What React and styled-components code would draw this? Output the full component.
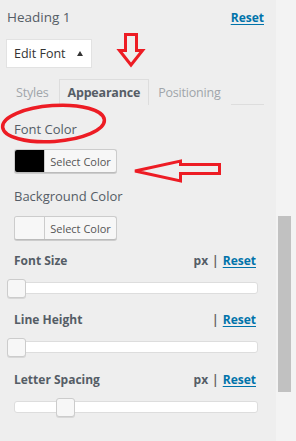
import React from "react";
import styled, { createGlobalStyle } from "styled-components";

const GlobalStyle = createGlobalStyle`
  html, body { margin: 0; padding: 0; }
  body {
    background: #eeeeee;
    font-family: "Open Sans", "Noto Sans", sans-serif;
  }
  * { box-sizing: border-box; }
`;

const Page = styled.div`
  position: relative;
  display: flex;
  width: 296px;
  height: 441px;
  overflow: hidden;
  background: #eeeeee;
`;

const Panel = styled.div`
  width: 276px;
  padding: 7px 12px 0 7px;
  display: flex;
  flex-direction: column;
`;

const HeaderRow = styled.div`
  display: flex;
  justify-content: space-between;
  align-items: baseline;
  height: 20px;
  line-height: 20px;
`;

const Title = styled.span`
  font-size: 13.5px;
  color: #555d66;
`;

const ResetLink = styled.a`
  font-size: 12px;
  font-weight: 700;
  color: #0073aa;
  text-decoration: underline;
  text-underline-offset: 2px;
  cursor: pointer;
`;

const EditFontButton = styled.button`
  margin: 12px 0 0 -1px;
  width: 86px;
  height: 29px;
  padding: 0 8px 0 7px;
  display: flex;
  align-items: center;
  justify-content: space-between;
  background: #ffffff;
  border: 1px solid #e2e2e2;
  font-family: inherit;
  font-size: 12.5px;
  color: #333333;
`;

const Caret = styled.span`
  width: 0;
  height: 0;
  border-left: 3.5px solid transparent;
  border-right: 3.5px solid transparent;
  border-bottom: 5px solid #333333;
`;

const Tabs = styled.div`
  margin-top: 11px;
  display: flex;
  height: 26px;
  border-bottom: 1px solid #dddddd;
`;

const Tab = styled.div`
  height: 26px;
  padding: 0 ${(p) => (p.$active ? "8px" : "9px")} 0 8px;
  display: flex;
  align-items: center;
  font-size: 12.5px;
  letter-spacing: -0.2px;
  font-weight: ${(p) => (p.$active ? 700 : 400)};
  color: ${(p) => (p.$active ? "#555d66" : "#a0a5aa")};
  border: 1px solid ${(p) => (p.$active ? "#dddddd" : "transparent")};
  border-bottom: none;
  background: #eeeeee;
  margin-bottom: -1px;
`;

const Content = styled.div`
  padding: 0 6px 0 7px;
  display: flex;
  flex-direction: column;
  align-items: flex-start;
`;

const FieldLabel = styled.div`
  margin-top: ${(p) => p.$gap}px;
  font-size: 13px;
  line-height: 18px;
  color: #555d66;
`;

const ColorButton = styled.button`
  margin-top: 11px;
  display: flex;
  align-items: stretch;
  height: 24px;
  width: 103px;
  padding: 0;
  border: 1px solid #cccccc;
  border-bottom-color: #bbbbbb;
  border-radius: 3px;
  background: #f7f7f7;
  box-shadow: 0 1px 0 #cccccc;
  overflow: hidden;
  font-family: inherit;
`;

const Swatch = styled.span`
  width: 30px;
  background: ${(p) => p.$color};
  border-right: 1px solid #cccccc;
`;

const ColorText = styled.span`
  flex: 1;
  display: flex;
  align-items: center;
  justify-content: center;
  font-size: 11px;
  color: #555555;
`;

const ControlHeader = styled.div`
  margin-top: ${(p) => p.$gap}px;
  width: 100%;
  display: flex;
  justify-content: space-between;
  line-height: 18px;
  font-size: 12px;
  font-weight: 700;
  color: #555d66;
`;

const Units = styled.span`
  display: flex;
  gap: 4px;
  padding-right: 2px;
`;

const Sep = styled.span`
  color: #666;
`;

const SliderWrap = styled.div`
  position: relative;
  margin-top: 9px;
  width: 244px;
  height: 18px;
  padding-top: 3px;
`;

const Track = styled.div`
  height: 12px;
  background: #ffffff;
  border: 1px solid #dddddd;
  border-radius: 3px;
`;

const Handle = styled.span`
  position: absolute;
  top: 0;
  width: 19px;
  height: 19px;
  background: #f7f7f7;
  border: 1px solid #cccccc;
  border-radius: 3px;
  box-shadow: 0 1px 0 #d8d8d8;
`;

const Scrollbar = styled.div`
  width: 20px;
  background: #f3f3f3;
  padding: 216px 5px 0 2px;
`;

const Thumb = styled.div`
  height: 176px;
  background: #c1c1c1;
`;

const Annotations = styled.svg`
  position: absolute;
  left: 0;
  top: 0;
  pointer-events: none;
`;

function Slider({ pct }) {
  return (
    <SliderWrap>
      <Track />
      <Handle style={{ left: `calc(${pct}% - 7px)` }} />
    </SliderWrap>
  );
}

function Control({ label, gap, unit, pct }) {
  return (
    <>
      <ControlHeader $gap={gap}>
        <span>{label}</span>
        <Units>
          {unit && <span>{unit}</span>}
          <Sep>|</Sep>
          <ResetLink>Reset</ResetLink>
        </Units>
      </ControlHeader>
      <Slider pct={pct} />
    </>
  );
}

export default function App() {
  return (
    <>
      <GlobalStyle />
      <Page>
        <Panel>
          <HeaderRow>
            <Title>Heading 1</Title>
            <ResetLink>Reset</ResetLink>
          </HeaderRow>
          <EditFontButton>
            <span>Edit Font</span>
            <Caret />
          </EditFontButton>
          <Tabs>
            <Tab>Styles</Tab>
            <Tab $active>Appearance</Tab>
            <Tab>Positioning</Tab>
          </Tabs>
          <Content>
            <FieldLabel $gap={15}>Font Color</FieldLabel>
            <ColorButton>
              <Swatch $color="#000000" />
              <ColorText>Select Color</ColorText>
            </ColorButton>
            <FieldLabel $gap={14}>Background Color</FieldLabel>
            <ColorButton>
              <Swatch $color="#f7f7f7" />
              <ColorText>Select Color</ColorText>
            </ColorButton>
            <Control label="Font Size" gap={12} unit="px" pct={0} />
            <Control label="Line Height" gap={14} pct={0} />
            <Control label="Letter Spacing" gap={15} unit="px" pct={20} />
          </Content>
        </Panel>
        <Scrollbar>
          <Thumb />
        </Scrollbar>
        <Annotations width="296" height="441" viewBox="0 0 296 441">
          <g fill="none" stroke="#ed1c24" strokeWidth="3" strokeLinejoin="miter">
            <polygon points="125.5,34.5 136.5,34.5 136.5,50.5 142.5,50.5 131,65 119.5,50.5 125.5,50.5" />
            <ellipse cx="53.5" cy="123.5" rx="51" ry="18" transform="rotate(-4 53.5 123.5)" strokeWidth="3.5" />
            <polygon points="135,171 180.5,161 180.5,164.5 219.5,164.5 219.5,173.5 180.5,173.5 180.5,181" />
          </g>
        </Annotations>
      </Page>
    </>
  );
}
